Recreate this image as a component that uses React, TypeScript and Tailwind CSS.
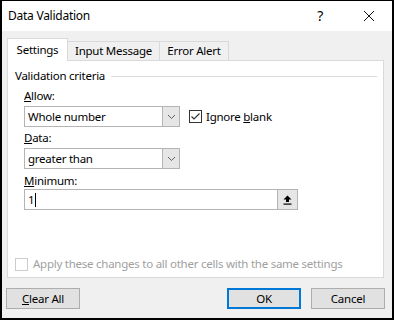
import React from "react";

const font = { fontFamily: '"Noto Sans", "Segoe UI", sans-serif' };

function Chevron() {
  return (
    <svg width="9" height="6" viewBox="0 0 9 6" className="text-[#606060]">
      <path d="M1 1 L4.5 4.5 L8 1" fill="none" stroke="currentColor" strokeWidth="1" />
    </svg>
  );
}

function Select({ value }: { value: string }) {
  return (
    <div className="flex h-[21px] w-[156px] border border-[#b4b4b4] bg-white">
      <div className="flex flex-1 items-center pl-[3px] text-black">{value}</div>
      <div className="flex w-[17px] items-center justify-center border-l border-[#b4b4b4] bg-[#e6e6e6]">
        <Chevron />
      </div>
    </div>
  );
}

function Check({ checked, disabled }: { checked?: boolean; disabled?: boolean }) {
  return (
    <div
      className={
        "flex h-[13px] w-[13px] items-center justify-center border bg-white " +
        (disabled ? "border-[#cccccc]" : "border-[#333333]")
      }
    >
      {checked && (
        <svg width="11" height="11" viewBox="0 0 11 11">
          <path d="M1.5 5.5 L4 8 L9.5 2.5" fill="none" stroke="#333333" strokeWidth="1.2" />
        </svg>
      )}
    </div>
  );
}

function Button({ children, primary }: { children: React.ReactNode; primary?: boolean }) {
  return (
    <div
      className={
        "flex h-[21px] w-[74px] items-center justify-center bg-[#e1e1e1] text-black " +
        (primary ? "border-2 border-[#0078d7]" : "border border-[#adadad]")
      }
    >
      {children}
    </div>
  );
}

export default function App() {
  return (
    <div
      className="flex h-[320px] w-[394px] flex-col border-x-2 border-t border-b-2 border-black text-[11.5px] leading-[16px] tracking-[-0.25px] text-black"
      style={font}
    >
      <div className="flex h-[30px] items-center bg-white pl-[6px]">
        <span className="flex-1 text-[12px]">Data Validation</span>
        <span className="mr-[40px] text-[14px]">?</span>
        <svg width="12" height="12" viewBox="0 0 12 12" className="mr-[17px]">
          <path d="M1 1 L11 11 M11 1 L1 11" stroke="#111" strokeWidth="1" />
        </svg>
      </div>

      <div className="flex flex-1 flex-col bg-[#f0f0f0]">
        <div className="ml-[5px] mt-[7px] flex items-end">
          <div className="relative z-10 -mb-px flex h-[23px] w-[61px] items-start justify-center border-x border-t border-[#d9d9d9] bg-white pt-[3px]">
            Settings
          </div>
          <div className="flex h-[19px] w-[92px] items-center justify-center border-t border-r border-[#d9d9d9]">
            Input Message
          </div>
          <div className="flex h-[19px] w-[69px] items-center justify-center border-t border-r border-[#d9d9d9]">
            Error Alert
          </div>
        </div>

        <div className="ml-[5px] flex h-[218px] w-[377px] flex-col border border-[#d9d9d9] bg-white">
          <div className="ml-[7px] mt-[7px] flex items-center">
            <span>Validation criteria</span>
            <div className="ml-[6px] mr-[6px] h-px flex-1 bg-[#dcdcdc]" />
          </div>

          <div className="ml-[16px] mt-[4px] flex flex-col">
            <span>
              <u>A</u>llow:
            </span>
            <div className="mt-[2px] flex items-center">
              <Select value="Whole number" />
              <div className="ml-[9px] flex items-center">
                <Check checked />
                <span className="ml-[4px]">
                  Ignore <u>b</u>lank
                </span>
              </div>
            </div>

            <span className="mt-[3px]">
              <u>D</u>ata:
            </span>
            <div className="mt-[2px]">
              <Select value="greater than" />
            </div>

            <span className="mt-[4px]">
              <u>M</u>inimum:
            </span>
            <div className="flex h-[21px] w-[274px] border border-[#b4b4b4] bg-white">
              <div className="flex flex-1 items-center pl-[3px]">
                1<span className="ml-px inline-block h-[14px] w-px bg-black" />
              </div>
              <div className="flex w-[20px] items-center justify-center border-l border-[#b4b4b4] bg-[#e6e6e6]">
                <svg width="9" height="10" viewBox="0 0 9 10">
                  <path d="M4.5 0.5 L8.5 4.5 L6 4.5 L6 7 L3 7 L3 4.5 L0.5 4.5 Z" fill="#000" />
                  <rect x="0.5" y="8.5" width="8" height="1.2" fill="#000" />
                </svg>
              </div>
            </div>
          </div>

          <div className="ml-[7px] mt-[46px] flex items-center text-[#a0a0a0]">
            <Check disabled />
            <span className="ml-[5px]">Apply these changes to all other cells with the same settings</span>
          </div>
        </div>

        <div className="mt-[10px] flex items-center">
          <div className="ml-[4px]">
            <Button>
              <span>
                <u>C</u>lear All
              </span>
            </Button>
          </div>
          <div className="ml-[147px]">
            <Button primary>OK</Button>
          </div>
          <div className="ml-[10px]">
            <Button>Cancel</Button>
          </div>
        </div>
      </div>
    </div>
  );
}
